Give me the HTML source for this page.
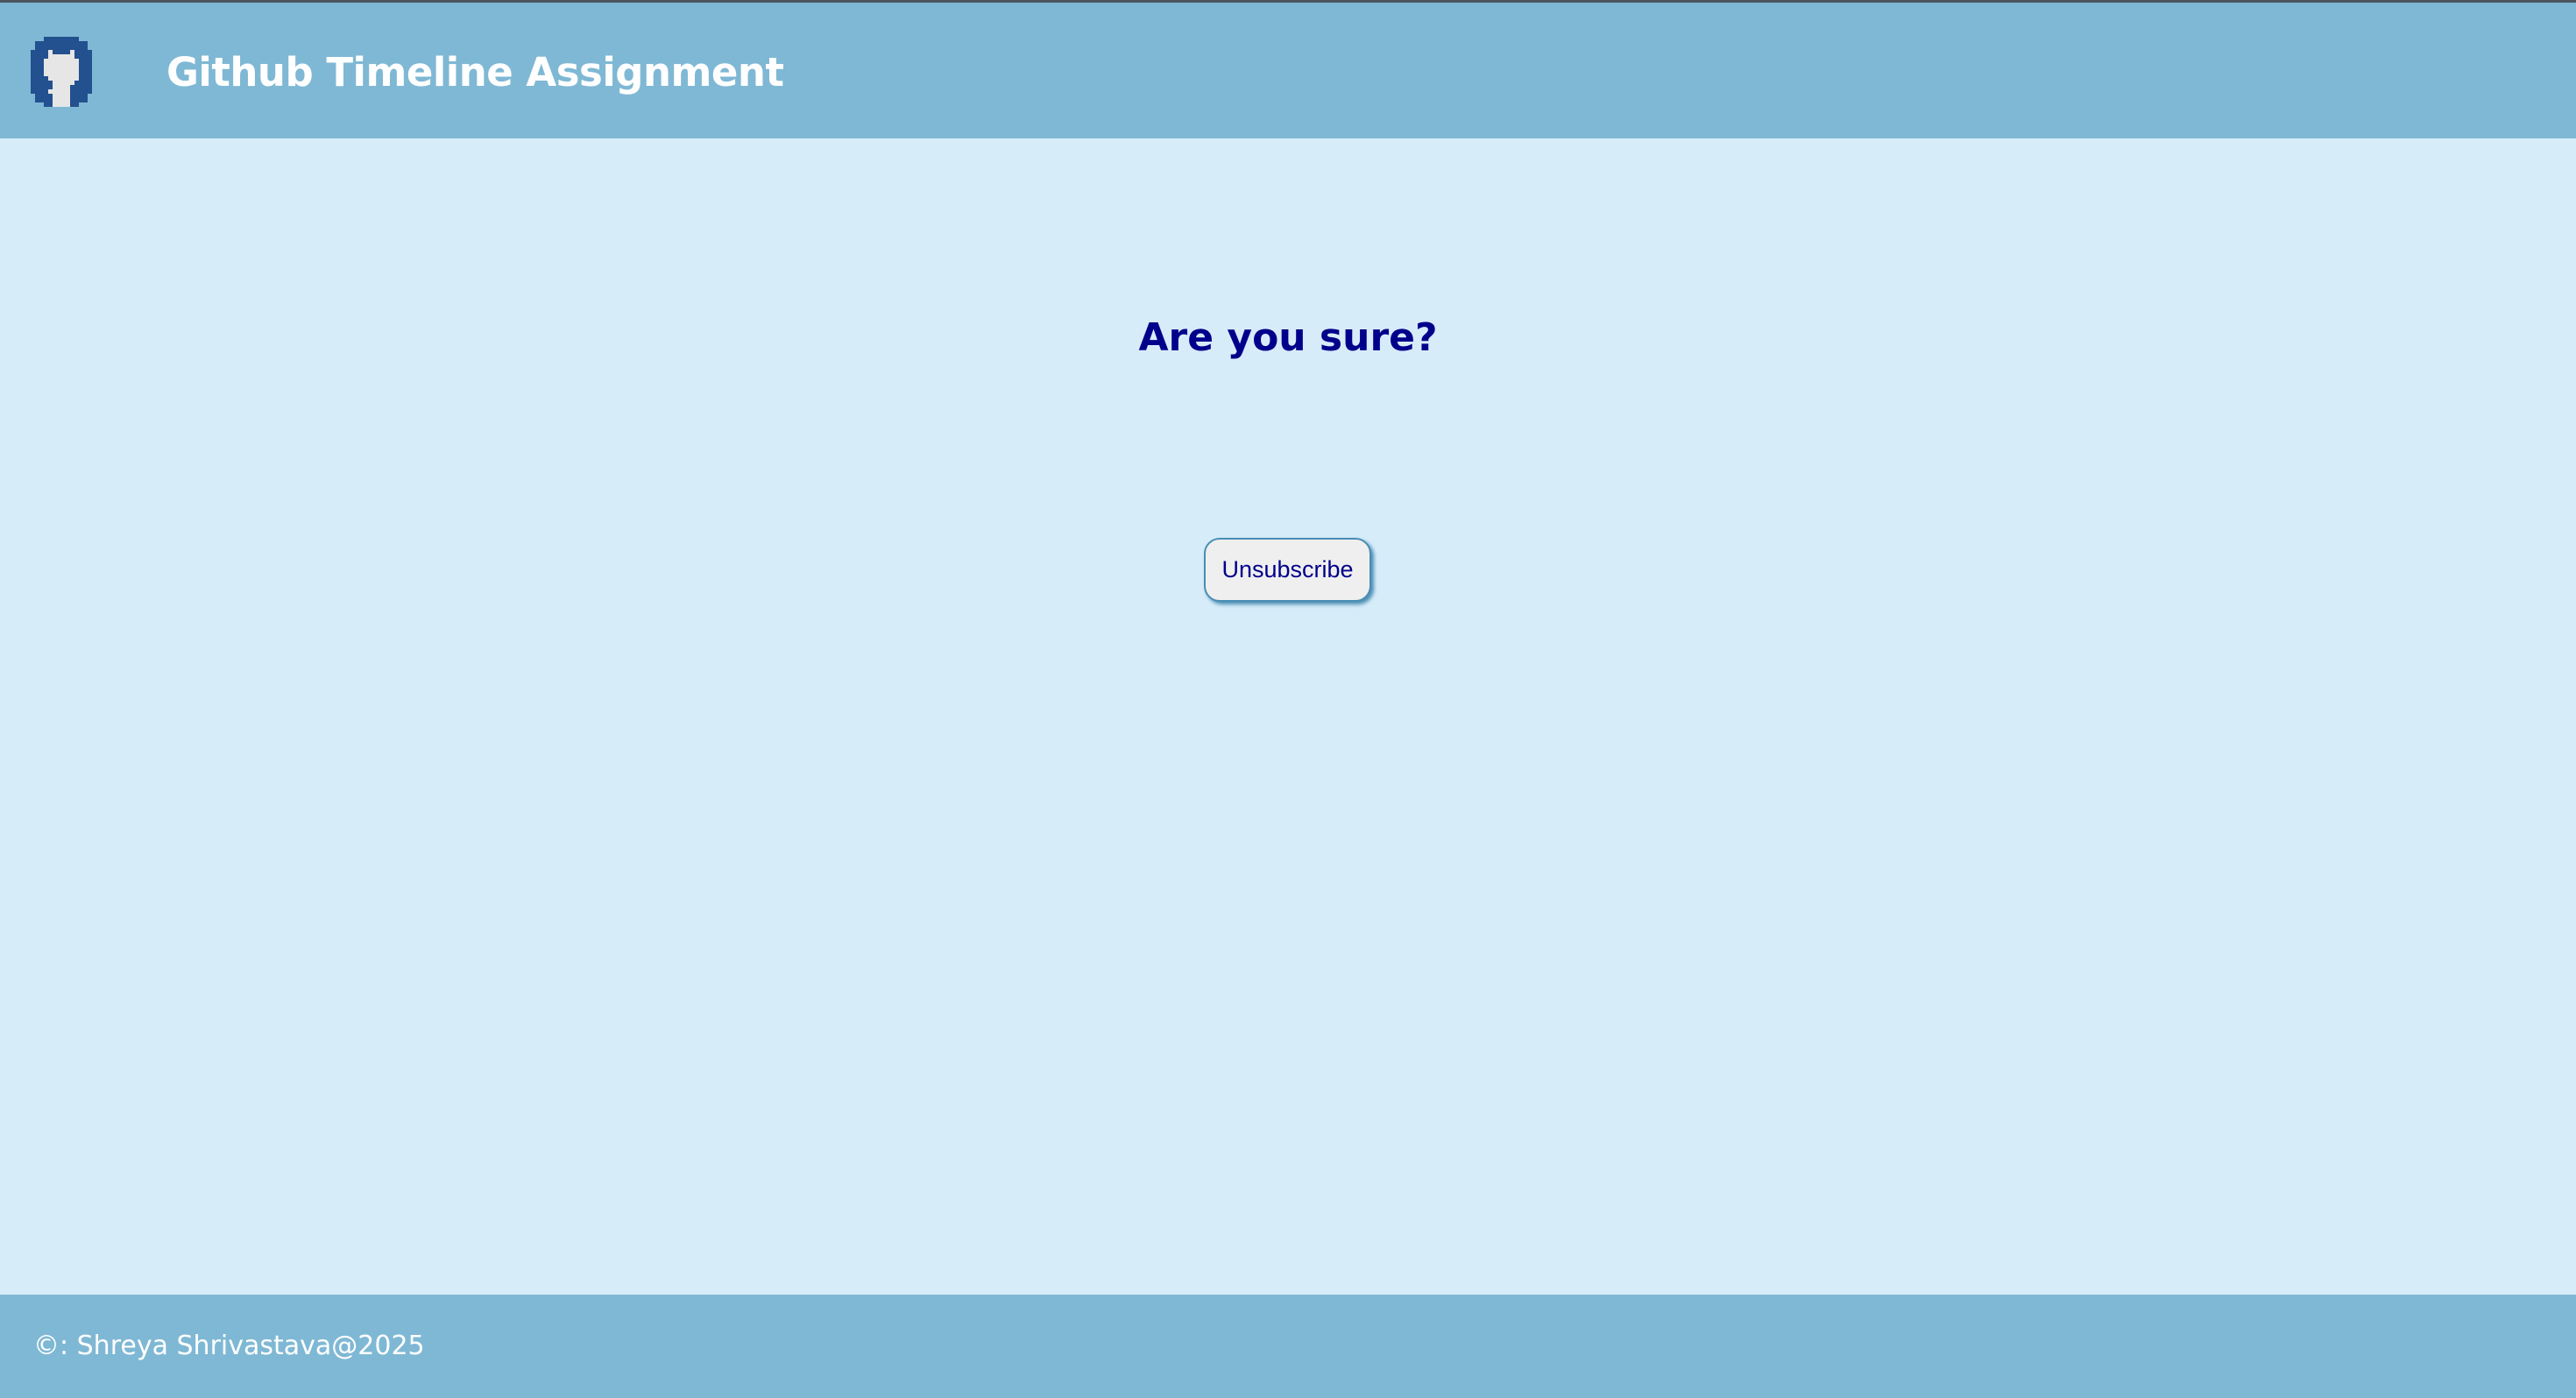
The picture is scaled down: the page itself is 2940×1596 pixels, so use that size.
<!DOCTYPE html>
<html><head><meta charset="utf-8"><style>
html,body{margin:0;padding:0;width:2940px;height:1596px;overflow:hidden;background:#d6ecf9;font-family:"DejaVu Sans","Liberation Sans",sans-serif;}
.top{position:absolute;left:0;top:0;width:2940px;height:3px;background:#4a5560;}
header{position:absolute;left:0;top:3px;width:2940px;height:155px;background:#7fb8d4;}
header h1{position:absolute;left:190px;top:2px;margin:0;line-height:155px;font-size:45px;font-weight:bold;color:#fff;letter-spacing:-0.5px;}
.logo{position:absolute;left:30px;top:39px;}
h2{position:absolute;left:0;width:2940px;top:360px;margin:0;text-align:center;font-size:44px;font-weight:bold;color:#00008b;}
.btn{position:absolute;left:1374px;top:614px;width:191px;height:73px;box-sizing:border-box;border:2px solid #4a8db3;border-radius:18px;background:#efefef;box-shadow:3px 3px 4px #4a8db3;font-family:"Liberation Sans",Arial,sans-serif;font-size:27px;color:#00008b;text-align:center;line-height:69px;}
footer{position:absolute;left:0;top:1478px;width:2940px;height:118px;background:#7fb8d4;}
footer p{margin:0;position:absolute;left:38px;top:0;line-height:118px;font-size:30px;color:#fff;}
</style></head><body>
<div class="top"></div>
<header>
<svg class="logo" width="80" height="80" viewBox="0 0 16 16" shape-rendering="crispEdges">
<path fill="#23508e" d="M4 0h8v1h2v2h1v10h-1v2h-2v1H4v-1H2v-2H1V3h1V1h2z"/>
<path fill="#e6e6e6" d="M5 3h1v1h4V3h1v2h1v5h-1v1h-1v5H6v-3H5v-1h1v-2H5V9H4V5h1z"/>
</svg>
<h1>Github Timeline Assignment</h1>
</header>
<h2>Are you sure?</h2>
<div class="btn">Unsubscribe</div>
<footer><p>©: Shreya Shrivastava@2025</p></footer>
</body></html>
